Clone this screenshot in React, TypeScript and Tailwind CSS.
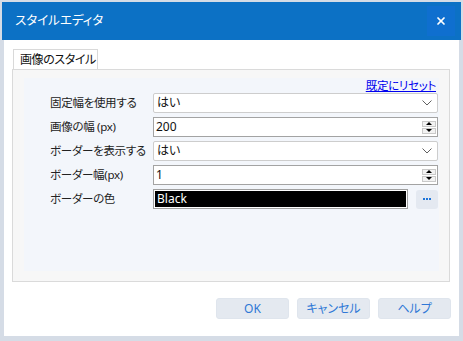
import { X } from "lucide-react";

const jp = "font-['Noto_Sans','Noto_Sans_CJK_JP',sans-serif] [font-feature-settings:'palt']";

function SelectBox({ value }: { value: string }) {
  return (
    <div className="flex h-[20px] flex-1 items-center justify-between rounded-[2px] border border-[#cdcdcd] bg-white pl-[3px] pr-[5px]">
      <span className="text-[12px] leading-none text-[#111]">{value}</span>
      <svg width="10" height="6" viewBox="0 0 10 6" fill="none">
        <polyline points="0.5,0.5 5,5 9.5,0.5" stroke="#606060" strokeWidth="1" />
      </svg>
    </div>
  );
}

function Spinner() {
  return (
    <div className="flex flex-col gap-[1px] pr-[1px]">
      <div className="flex h-[6px] w-[14px] items-center justify-center border border-[#c9c9c9] bg-[#f2f2f2]">
        <div className="h-0 w-0 border-x-[3px] border-b-[3px] border-x-transparent border-b-black" />
      </div>
      <div className="flex h-[6px] w-[14px] items-center justify-center border border-[#c9c9c9] bg-[#f2f2f2]">
        <div className="h-0 w-0 border-x-[3px] border-t-[3px] border-x-transparent border-t-black" />
      </div>
    </div>
  );
}

function NumberBox({ value }: { value: string }) {
  return (
    <div className="flex h-[20px] flex-1 items-center justify-between border border-[#a3a3a3] bg-white pl-[2px]">
      <span className="text-[12px] leading-none text-[#111]">{value}</span>
      <Spinner />
    </div>
  );
}

function Row({ label, children }: { label: string; children: React.ReactNode }) {
  return (
    <div className="flex h-[20px] items-center">
      <div className="w-[103px] whitespace-nowrap text-[11.5px] tracking-[-0.3px] text-[#222]">{label}</div>
      {children}
    </div>
  );
}

export default function App() {
  return (
    <div className={`flex h-[341px] w-[463px] flex-col bg-[#d5dce6] p-[2px] ${jp}`}>
      {/* タイトルバー */}
      <div className="flex h-[38px] items-center justify-between bg-[#0c71c5] pl-[13px] pr-[6px]">
        <span className="text-[12.5px] text-white">スタイルエディタ</span>
        <div className="flex h-[30px] w-[28px] items-center justify-center bg-[#0f6fcf]">
          <X size={12} strokeWidth={3.5} className="text-white" />
        </div>
      </div>

      <div className="mx-[2px] mb-[3px] flex flex-1 flex-col bg-white px-[8px] pt-[9px]">
        {/* タブ */}
        <div className="ml-[1px] flex h-[20px] w-[85px] items-center whitespace-nowrap border border-b-0 border-[#d9d9d9] bg-white pl-[6px] text-[12px] tracking-[-0.4px] text-[#111]">
          画像のスタイル
        </div>
        <div className="h-[213px] w-[438px] border border-[#dadada] bg-[#f7f7f7] pb-[10px] pl-[11px] pr-[10px] pt-[8px]">
          <div className="h-full bg-[#f3f6fb] pl-[26px] pr-[1px]">
            <div className="flex h-[15px] justify-end pr-[2px]">
              <span className="text-[11.5px] leading-[15px] tracking-[-0.3px] text-[#0000ee] underline">既定にリセット</span>
            </div>
            <div className="flex flex-col gap-[4px]">
              <Row label="固定幅を使用する">
                <SelectBox value="はい" />
              </Row>
              <Row label="画像の幅 (px)">
                <NumberBox value="200" />
              </Row>
              <Row label="ボーダーを表示する">
                <SelectBox value="はい" />
              </Row>
              <Row label="ボーダー幅(px)">
                <NumberBox value="1" />
              </Row>
              <Row label="ボーダーの色">
                <div className="flex h-[20px] flex-1 items-center">
                  <div className="h-[20px] flex-1 border border-[#a0a0a0] bg-white p-[1px]">
                    <div className="flex h-full items-center bg-black pl-[2px] text-[12px] text-white">Black</div>
                  </div>
                  <div className="ml-[8px] flex h-[19px] w-[22px] items-center justify-center gap-[1px] rounded-[3px] bg-[#e4e9f1]">
                    <span className="h-[2px] w-[2px] bg-[#1d74d8]" />
                    <span className="h-[2px] w-[2px] bg-[#1d74d8]" />
                    <span className="h-[2px] w-[2px] bg-[#1d74d8]" />
                  </div>
                </div>
              </Row>
            </div>
          </div>
        </div>

        {/* ボタン */}
        <div className="mt-[16px] flex justify-end gap-[8px]">
          {["OK", "キャンセル", "ヘルプ"].map((t) => (
            <div
              key={t}
              className="flex h-[21px] w-[73px] items-center justify-center rounded-[3px] border border-[#dfe5ed] bg-[#e4e9f0] text-[12px] text-[#2f78d6]"
            >
              {t}
            </div>
          ))}
        </div>
      </div>
    </div>
  );
}
